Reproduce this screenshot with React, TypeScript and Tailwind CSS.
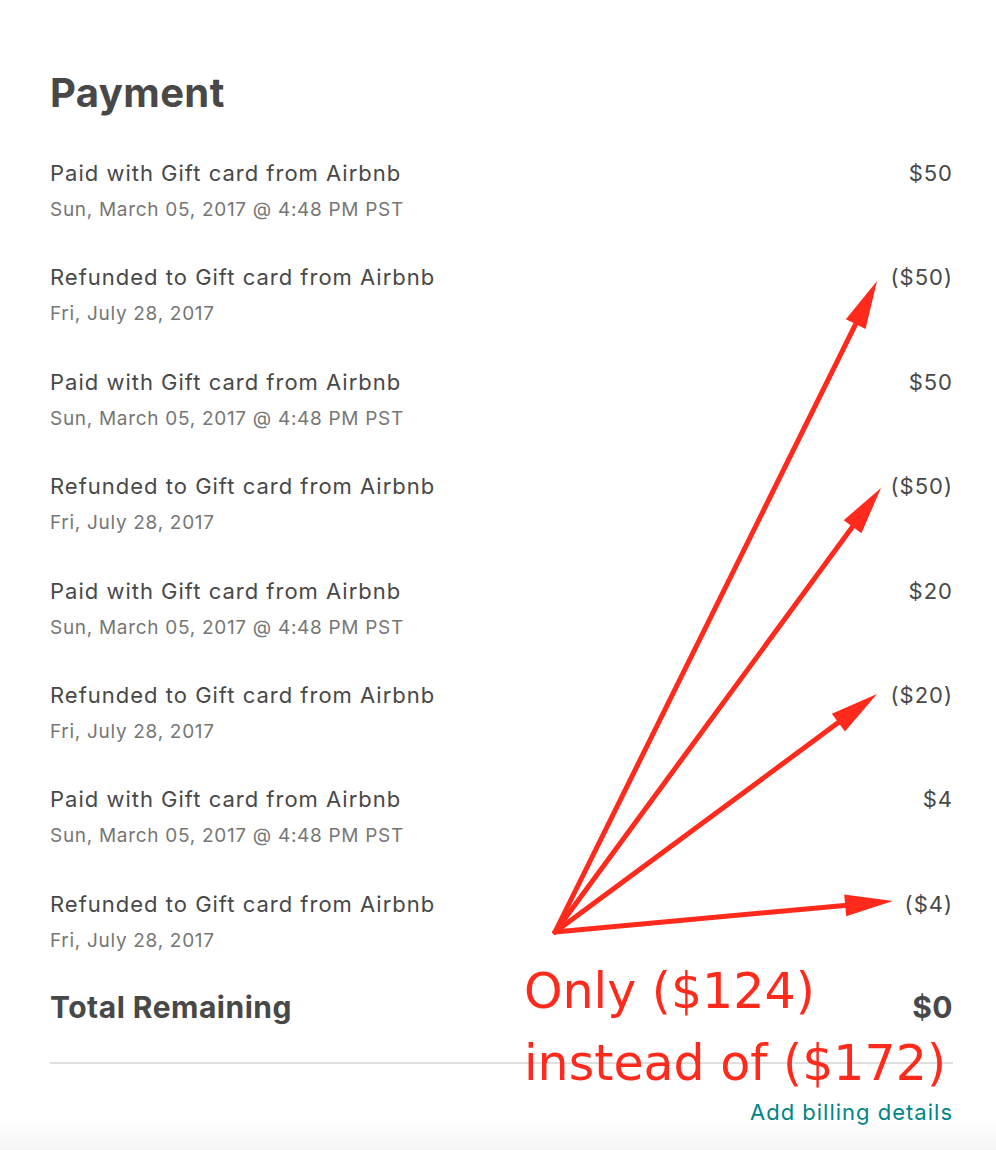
const rows = [
  { title: 'Paid with Gift card from Airbnb', date: 'Sun, March 05, 2017 @ 4:48 PM PST', amount: '$50' },
  { title: 'Refunded to Gift card from Airbnb', date: 'Fri, July 28, 2017', amount: '($50)' },
  { title: 'Paid with Gift card from Airbnb', date: 'Sun, March 05, 2017 @ 4:48 PM PST', amount: '$50' },
  { title: 'Refunded to Gift card from Airbnb', date: 'Fri, July 28, 2017', amount: '($50)' },
  { title: 'Paid with Gift card from Airbnb', date: 'Sun, March 05, 2017 @ 4:48 PM PST', amount: '$20' },
  { title: 'Refunded to Gift card from Airbnb', date: 'Fri, July 28, 2017', amount: '($20)' },
  { title: 'Paid with Gift card from Airbnb', date: 'Sun, March 05, 2017 @ 4:48 PM PST', amount: '$4' },
  { title: 'Refunded to Gift card from Airbnb', date: 'Fri, July 28, 2017', amount: '($4)' },
];

const ORIGIN = { x: 555, y: 932 };
const TIPS = [
  { x: 877, y: 281 },
  { x: 881, y: 488 },
  { x: 877, y: 694 },
  { x: 893, y: 901 },
];

function Arrow({ tip }: { tip: { x: number; y: number } }) {
  const dx = tip.x - ORIGIN.x;
  const dy = tip.y - ORIGIN.y;
  const len = Math.sqrt(dx * dx + dy * dy);
  const ux = dx / len;
  const uy = dy / len;
  const headLen = 48;
  const half = 11;
  const bx = tip.x - ux * headLen;
  const by = tip.y - uy * headLen;
  const pts = [
    `${tip.x},${tip.y}`,
    `${bx - uy * half},${by + ux * half}`,
    `${bx + uy * half},${by - ux * half}`,
  ].join(' ');
  return (
    <g>
      <line
        x1={ORIGIN.x}
        y1={ORIGIN.y}
        x2={bx + ux * 2}
        y2={by + uy * 2}
        stroke="#ff2a1c"
        strokeWidth={5}
        strokeLinecap="round"
      />
      <polygon points={pts} fill="#ff2a1c" />
    </g>
  );
}

export default function App() {
  return (
    <div
      className="relative w-[996px] h-[1150px] overflow-hidden bg-white text-[#484848]"
      style={{ fontFamily: 'Inter, "Noto Sans", sans-serif' }}
    >
      <div className="absolute left-0 right-0 bottom-0 h-[32px] bg-gradient-to-b from-white to-[#f5f5f5]" />

      <div className="relative pl-[50px] pr-[43px] pt-[69px]">
        {/* Header */}
        <h1 className="text-[40px] leading-[48px] font-bold tracking-[0.4px]">Payment</h1>

        {/* Payment rows */}
        <div className="mt-[42px] flex flex-col gap-[41.4px]">
          {rows.map((row, i) => (
            <div key={i} className="flex justify-between">
              <div>
                <div className="text-[22px] leading-[28px] tracking-[1px]">{row.title}</div>
                <div className="mt-[11px] text-[19px] leading-[24px] tracking-[0.7px] text-[#767676]">
                  {row.date}
                </div>
              </div>
              <div className="text-[22px] leading-[28px] tracking-[1px]">{row.amount}</div>
            </div>
          ))}
        </div>

        {/* Total */}
        <div className="mt-[36px] flex justify-between text-[30px] leading-[36px] font-bold tracking-[0.5px]">
          <span>Total Remaining</span>
          <span>$0</span>
        </div>

        <div className="mt-[37px] h-[2px] bg-[#dce0e0]" />

        <div className="mt-[36px] text-right text-[22px] leading-[24px] tracking-[1px] text-[#008489]">
          Add billing details
        </div>
      </div>

      {/* Annotation overlay */}
      <svg className="absolute inset-0 pointer-events-none" width={996} height={1150}>
        {TIPS.map((t, i) => (
          <Arrow key={i} tip={t} />
        ))}
      </svg>
      <div
        className="absolute left-[524px] top-[956px] text-[49px] leading-[72px] text-[#ff2a1c]"
        style={{ fontFamily: '"DejaVu Sans", sans-serif' }}
      >
        <div>Only ($124)</div>
        <div>instead of ($172)</div>
      </div>
    </div>
  );
}
